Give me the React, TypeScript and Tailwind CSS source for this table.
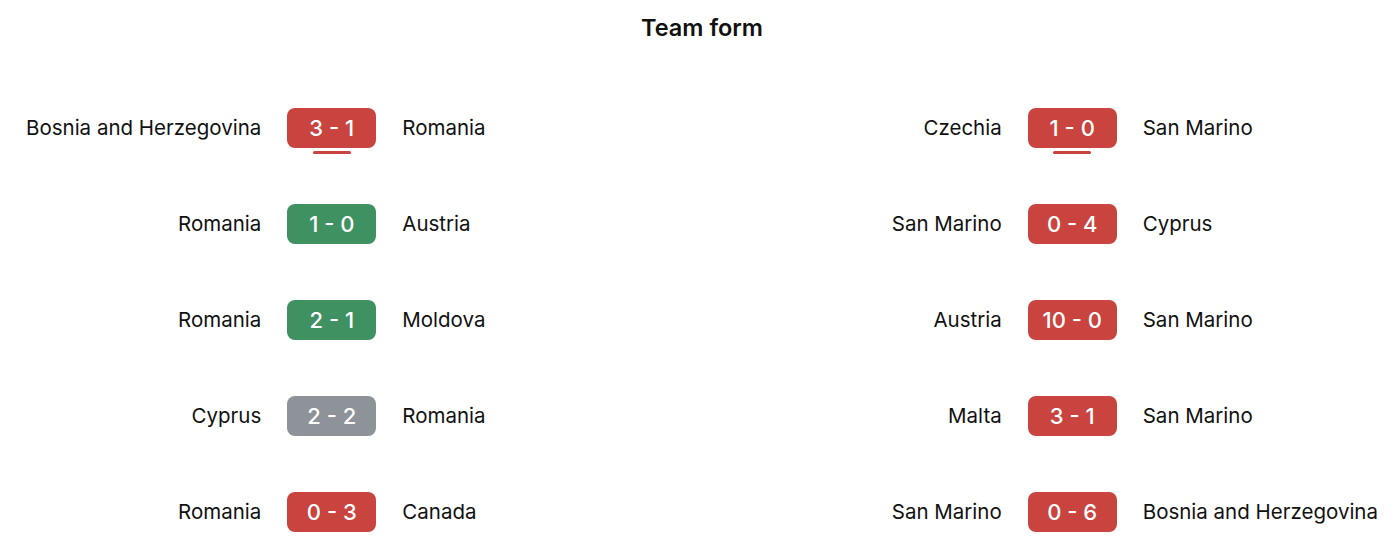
import React from "react";

type Match = { home: string; away: string; score: string; color: "red" | "green" | "gray"; mark?: boolean };

const left: Match[] = [
  { home: "Bosnia and Herzegovina", away: "Romania", score: "3 - 1", color: "red", mark: true },
  { home: "Romania", away: "Austria", score: "1 - 0", color: "green" },
  { home: "Romania", away: "Moldova", score: "2 - 1", color: "green" },
  { home: "Cyprus", away: "Romania", score: "2 - 2", color: "gray" },
  { home: "Romania", away: "Canada", score: "0 - 3", color: "red" },
];

const right: Match[] = [
  { home: "Czechia", away: "San Marino", score: "1 - 0", color: "red", mark: true },
  { home: "San Marino", away: "Cyprus", score: "0 - 4", color: "red" },
  { home: "Austria", away: "San Marino", score: "10 - 0", color: "red" },
  { home: "Malta", away: "San Marino", score: "3 - 1", color: "red" },
  { home: "San Marino", away: "Bosnia and Herzegovina", score: "0 - 6", color: "red" },
];

const bg = {
  red: "bg-[#c9443f]",
  green: "bg-[#3f9161]",
  gray: "bg-[#8e9399]",
};

function Column({ items }: { items: Match[] }) {
  return (
    <div className="grid grid-cols-[auto_89px_auto] gap-x-[26px] gap-y-[56px] items-center">
      {items.map((m, i) => (
        <React.Fragment key={i}>
          <div className="text-right whitespace-nowrap">{m.home}</div>
          <div className="relative">
            <div
              className={`${bg[m.color]} h-[40px] rounded-[8px] flex items-center justify-center text-white text-[22px] font-medium whitespace-pre`}
            >
              {m.score}
            </div>
            {m.mark && (
              <div className="absolute left-1/2 -translate-x-1/2 top-[43px] w-[38px] h-[3px] rounded-full bg-[#c9443f]" />
            )}
          </div>
          <div className="whitespace-nowrap">{m.away}</div>
        </React.Fragment>
      ))}
    </div>
  );
}

export default function App() {
  return (
    <div
      className="w-[1398px] h-[550px] bg-white text-[#111] text-[20.5px]"
      style={{ fontFamily: "Inter, 'Noto Sans', sans-serif" }}
    >
      <div className="pt-[12px] pl-[6px] text-center text-[23.5px] font-semibold leading-[32px]">Team form</div>
      <div className="mt-[64px] pl-[26px] pr-[20px] flex justify-between">
        <Column items={left} />
        <Column items={right} />
      </div>
    </div>
  );
}
